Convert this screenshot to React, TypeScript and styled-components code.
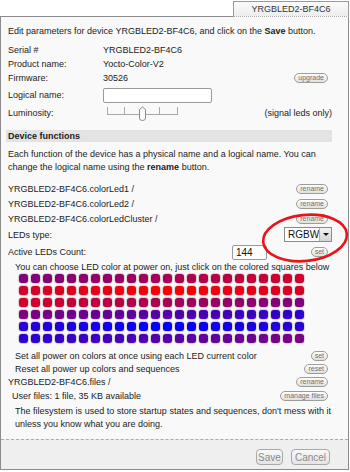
import React from "react";
import styled, { createGlobalStyle } from "styled-components";

const GlobalStyle = createGlobalStyle`
  html, body {
    margin: 0;
    padding: 0;
    background: #fff;
  }
  body {
    font-family: "Liberation Sans", Arial, sans-serif;
    font-size: 9px;
    color: #222;
  }
`;

const Page = styled.div`
  position: relative;
  width: 350px;
  height: 472px;
  padding-top: 1px;
  box-sizing: border-box;
`;

const TabBar = styled.div`
  display: flex;
  justify-content: flex-end;
  padding-right: 1px;
`;

const Tab = styled.div`
  position: relative;
  z-index: 1;
  width: 116px;
  height: 16px;
  box-sizing: border-box;
  margin-bottom: -1px;
  border: 1px solid #9a9a9a;
  border-bottom: 1px dotted #aaa;
  background: linear-gradient(#fbfbfb, #ededed);
  text-align: center;
  line-height: 14px;
  color: #333;
`;

const Panel = styled.div`
  width: 349px;
  box-sizing: border-box;
  border: 1px solid #8c8c8c;
  background: #f9f9f9;
`;

const Content = styled.div`
  padding: 8px 16px 8px 5px;
`;

const Intro = styled.div`
  padding-left: 2px;
  line-height: 13px;
  margin-bottom: 5px;
`;

const Row = styled.div<{ $h: number; $indent?: number; $mt?: number }>`
  display: flex;
  align-items: center;
  height: ${(p) => p.$h}px;
  margin-top: ${(p) => p.$mt ?? 0}px;
  padding-left: ${(p) => p.$indent ?? 2}px;
`;

const Label = styled.span<{ $w?: number }>`
  flex: none;
  width: ${(p) => (p.$w ? `${p.$w}px` : "auto")};
`;

const Spacer = styled.span`
  flex: 1;
`;

const SmallButton = styled.button`
  flex: none;
  height: 10px;
  margin: 0 4px 0 0;
  padding: 0 3px;
  box-sizing: border-box;
  border: 1px solid #9c9c9c;
  border-radius: 5px;
  background: linear-gradient(#fefefe, #e0e0e0);
  font-family: "Liberation Sans", Arial, sans-serif;
  font-size: 7px;
  line-height: 8px;
  color: #707070;
`;

const TextInput = styled.div<{ $w: number }>`
  flex: none;
  width: ${(p) => p.$w}px;
  height: 15px;
  box-sizing: border-box;
  border: 1px solid #9a9a9a;
  border-radius: 2px;
  background: #fff;
  padding-left: 3px;
  font-size: 10px;
  line-height: 13px;
  color: #111;
`;

const SectionHeader = styled.div`
  margin-top: 9px;
  height: 12px;
  line-height: 12px;
  padding-left: 2px;
  background: #e3e3e3;
  font-weight: bold;
  color: #222;
`;

const Para = styled.p<{ $indent?: number; $mt?: number; $justify?: boolean }>`
  margin: ${(p) => p.$mt ?? 0}px 0 0;
  padding-left: ${(p) => p.$indent ?? 2}px;
  padding-right: ${(p) => (p.$justify ? 1 : 0)}px;
  line-height: 13px;
  text-align: ${(p) => (p.$justify ? "justify" : "left")};
`;

const Select = styled.div`
  display: flex;
  width: 48px;
  height: 15px;
  box-sizing: border-box;
  border: 1px solid #8a8a8a;
  background: #fff;
`;

const SelectValue = styled.span`
  flex: 1;
  padding-left: 3px;
  font-size: 10px;
  line-height: 13px;
  color: #111;
`;

const SelectArrow = styled.span`
  position: relative;
  width: 13px;
  border-left: 1px solid #b0b0b0;
  background: linear-gradient(#f4f4f4, #d4d4d4);

  &::after {
    content: "";
    position: absolute;
    left: 3px;
    top: 5px;
    border-left: 3px solid transparent;
    border-right: 3px solid transparent;
    border-top: 3px solid #111;
  }
`;

const LedGrid = styled.div`
  display: grid;
  grid-template-columns: repeat(24, 9px);
  grid-auto-rows: 9px;
  gap: 3px;
  margin-top: 1px;
  padding-left: 13px;
  margin-bottom: 6px;
`;

const Led = styled.span`
  border-radius: 3px;
  box-shadow: 0 0 1px 0.5px rgba(90, 90, 90, 0.45);
`;

const Footer = styled.div`
  display: flex;
  justify-content: flex-end;
  gap: 8px;
  padding: 9px 18px 4px 0;
  border-top: 1px dashed #aaa;
  background: #efefef;
`;

const FooterButton = styled.button<{ $w: number }>`
  width: ${(p) => p.$w}px;
  height: 16px;
  padding: 0;
  border: 1px solid #a8a8a8;
  border-radius: 4px;
  background: linear-gradient(#f8f8f8, #e4e4e4);
  font-family: "Liberation Sans", Arial, sans-serif;
  font-size: 10px;
  color: #8a8a8a;
`;

const Annotation = styled.svg`
  position: absolute;
  left: 256px;
  top: 208px;
  pointer-events: none;
`;

const Slider = () => (
  <svg width="80" height="16" viewBox="0 0 80 16" style={{ marginLeft: 3 }}>
    <g stroke="#a8a8a8" strokeWidth="1" fill="none">
      <line x1="1" y1="9.5" x2="72" y2="9.5" />
      <line x1="1.5" y1="2" x2="1.5" y2="10" />
      <line x1="18.5" y1="2" x2="18.5" y2="10" />
      <line x1="36.5" y1="2" x2="36.5" y2="10" />
      <line x1="53.5" y1="2" x2="53.5" y2="10" />
      <line x1="71.5" y1="2" x2="71.5" y2="10" />
    </g>
    <path
      d="M33.5 4.5 L36.5 2 L39.5 4.5 L39.5 13 Q39.5 15.5 36.5 15.5 Q33.5 15.5 33.5 13 Z"
      fill="#fdfdfd"
      stroke="#8a8a8a"
      strokeWidth="1"
    />
  </svg>
);

const ledColor = (i: number) => {
  const k = (((i - 36) % 144) + 144) % 144;
  const dist = Math.min(k, 144 - k);
  const t = 1 - dist / 72;
  return `rgb(${Math.round(255 * t)}, 0, ${Math.round(255 * (1 - t))})`;
};

const leds = Array.from({ length: 144 }, (_, i) => ledColor(i));

export default function App() {
  return (
    <Page>
      <GlobalStyle />
      <TabBar>
        <Tab>YRGBLED2-BF4C6</Tab>
      </TabBar>
      <Panel>
        <Content>
          <Intro>
            Edit parameters for device YRGBLED2-BF4C6, and click on the <b>Save</b> button.
          </Intro>
          <Row $h={14}>
            <Label $w={95}>Serial #</Label>
            <span>YRGBLED2-BF4C6</span>
          </Row>
          <Row $h={14}>
            <Label $w={95}>Product name:</Label>
            <span>Yocto-Color-V2</span>
          </Row>
          <Row $h={14}>
            <Label $w={95}>Firmware:</Label>
            <span>30526</span>
            <Spacer />
            <SmallButton>upgrade</SmallButton>
          </Row>
          <Row $h={20}>
            <Label $w={95}>Logical name:</Label>
            <TextInput $w={109} />
          </Row>
          <Row $h={16}>
            <Label $w={95}>Luminosity:</Label>
            <Slider />
            <Spacer />
            <span>(signal leds only)</span>
          </Row>

          <SectionHeader>Device functions</SectionHeader>
          <Para $mt={6}>
            Each function of the device has a physical name and a logical name. You can change the
            logical name using the <b>rename</b> button.
          </Para>

          <Row $h={15} $mt={7}>
            <span>YRGBLED2-BF4C6.colorLed1 /</span>
            <Spacer />
            <SmallButton>rename</SmallButton>
          </Row>
          <Row $h={15}>
            <span>YRGBLED2-BF4C6.colorLed2 /</span>
            <Spacer />
            <SmallButton>rename</SmallButton>
          </Row>
          <Row $h={15}>
            <span>YRGBLED2-BF4C6.colorLedCluster /</span>
            <Spacer />
            <SmallButton>rename</SmallButton>
          </Row>
          <Row $h={17}>
            <span>LEDs type:</span>
            <Spacer />
            <Select>
              <SelectValue>RGBW</SelectValue>
              <SelectArrow />
            </Select>
          </Row>
          <Row $h={18}>
            <Label $w={224}>Active LEDs Count:</Label>
            <TextInput $w={35}>144</TextInput>
            <Spacer />
            <SmallButton>set</SmallButton>
          </Row>
          <Row $h={12} $indent={9}>
            <span>You can choose LED color at power on, just click on the colored squares below</span>
          </Row>
          <LedGrid>
            {leds.map((c, i) => (
              <Led key={i} style={{ background: c }} />
            ))}
          </LedGrid>

          <Row $h={13} $indent={9}>
            <span>Set all power on colors at once using each LED current color</span>
            <Spacer />
            <SmallButton>set</SmallButton>
          </Row>
          <Row $h={13} $indent={9}>
            <span>Reset all power up colors and sequences</span>
            <Spacer />
            <SmallButton>reset</SmallButton>
          </Row>
          <Row $h={14}>
            <span>YRGBLED2-BF4C6.files /</span>
            <Spacer />
            <SmallButton>rename</SmallButton>
          </Row>
          <Row $h={14} $indent={6}>
            <span>User files: 1 file, 35 KB available</span>
            <Spacer />
            <SmallButton>manage files</SmallButton>
          </Row>
          <Para $indent={9} $mt={2} $justify>
            The filesystem is used to store startup states and sequences, don't mess with it unless
            you know what you are doing.
          </Para>
        </Content>
        <Footer>
          <FooterButton $w={27}>Save</FooterButton>
          <FooterButton $w={39}>Cancel</FooterButton>
        </Footer>
      </Panel>
      <Annotation width="96" height="60" viewBox="0 0 96 60">
        <ellipse
          cx="49"
          cy="30"
          rx="42"
          ry="23"
          transform="rotate(-6 49 30)"
          fill="none"
          stroke="#e8141a"
          strokeWidth="2.6"
        />
      </Annotation>
    </Page>
  );
}
